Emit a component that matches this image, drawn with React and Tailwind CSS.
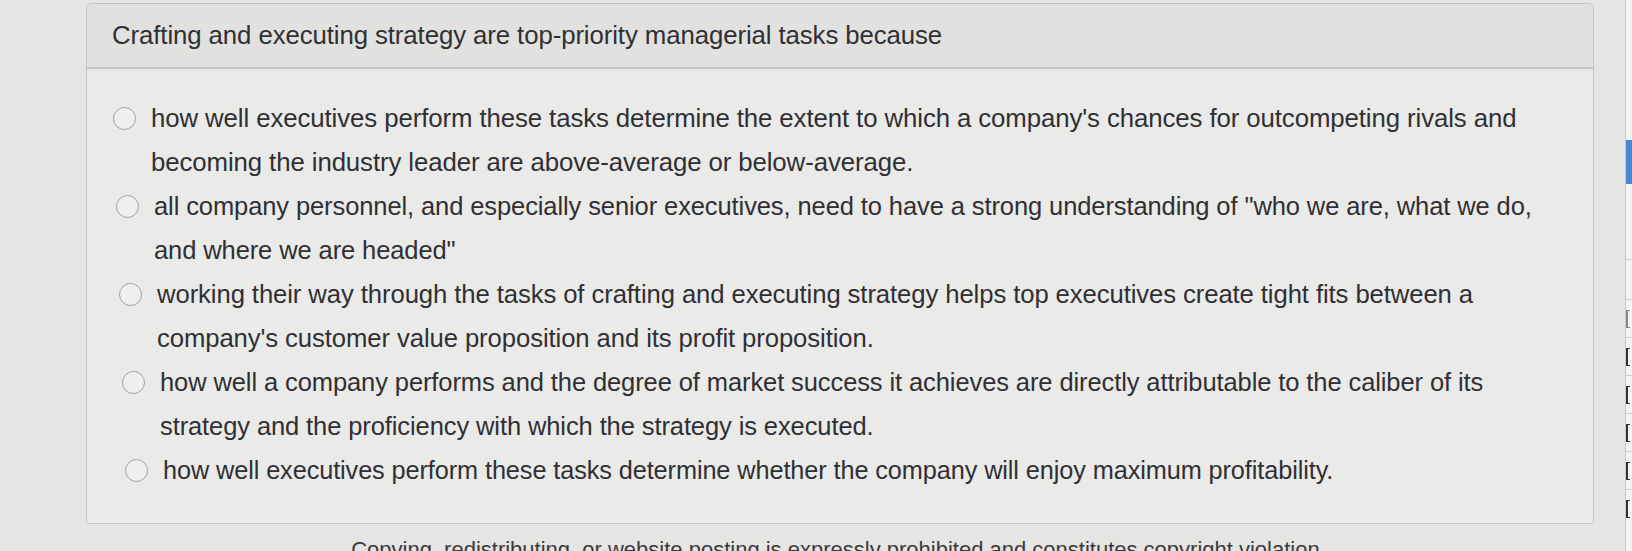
import React from 'react';

const options = [
  {
    id: 'a',
    shift: 'pl-[0px] text-[25.8px]',
    lines: [
      "how well executives perform these tasks determine the extent to which a company's chances for outcompeting rivals and",
      'becoming the industry leader are above-average or below-average.',
    ],
  },
  {
    id: 'b',
    shift: 'pl-[3px] text-[25.5px]',
    lines: [
      'all company personnel, and especially senior executives, need to have a strong understanding of "who we are, what we do,',
      'and where we are headed"',
    ],
  },
  {
    id: 'c',
    shift: 'pl-[6px] text-[25.7px]',
    lines: [
      'working their way through the tasks of crafting and executing strategy helps top executives create tight fits between a',
      "company's customer value proposition and its profit proposition.",
    ],
  },
  {
    id: 'd',
    shift: 'pl-[9px] text-[25.5px]',
    lines: [
      'how well a company performs and the degree of market success it achieves are directly attributable to the caliber of its',
      'strategy and the proficiency with which the strategy is executed.',
    ],
  },
  {
    id: 'e',
    shift: 'pl-[12px] text-[25.3px]',
    lines: ['how well executives perform these tasks determine whether the company will enjoy maximum profitability.'],
  },
];

const Option = ({ opt }) => (
  <label className={`flex items-start gap-[15px] ${opt.shift}`}>
    <span className="mt-[11px] w-[23px] h-[23px] shrink-0 rounded-full border-[1.5px] border-[#a0a0a0] bg-[#efefed]"></span>
    <span className="flex flex-col">
      {opt.lines.map((l, i) => (
        <span key={i} className="whitespace-nowrap leading-[44px]">{l}</span>
      ))}
    </span>
  </label>
);

const App = () => {
  return (
    <div
      className="w-[1632px] h-[551px] overflow-hidden bg-[#e5e5e3] flex text-[#303034]"
      style={{ fontFamily: '"Liberation Sans", Arial, sans-serif' }}
    >
      <div className="w-[1625px] flex flex-col">
        <div className="shrink-0 ml-[86px] mt-[3px] w-[1508px] border border-[#c4c4c2] rounded-t-[6px] rounded-b-[4px] overflow-hidden">
          <div className="h-[65px] bg-[#e1e1df] border-b-2 border-[#c2c2c0] flex items-center pl-[25px]">
            <h1 className="text-[25.8px] tracking-[-0.1px]">
              Crafting and executing strategy are top-priority managerial tasks because
            </h1>
          </div>
          <div className="h-[454px] bg-[#eaeae8] pt-[27px] pl-[26px] tracking-[-0.1px] flex flex-col">
            {options.map((o) => (
              <Option key={o.id} opt={o} />
            ))}
          </div>
        </div>
        <p className="shrink-0 mt-[9px] text-center text-[22px] text-[#3a3a3e] pl-[52px]">
          Copying, redistributing, or website posting is expressly prohibited and constitutes copyright violation.
        </p>
      </div>
      <div className="w-[7px] bg-[#f4f4f2] border-l border-[#c9c9c7] flex flex-col">
        <div className="mt-[140px] h-[44px] bg-[#4a86d8]"></div>
        <div className="mt-[75px] h-[40px] border-t border-[#cfcfcf]"></div>
        <div className="h-[38px] border-t border-[#cfcfcf] pt-[10px]">
          <div className="w-[4px] h-[18px] border-l-2 border-y border-[#888]"></div>
        </div>
        <div className="h-[38px] border-t border-[#cfcfcf] pt-[10px]">
          <div className="w-[4px] h-[18px] border-l-2 border-y border-[#333]"></div>
        </div>
        <div className="h-[38px] border-t border-[#cfcfcf] pt-[10px]">
          <div className="w-[4px] h-[18px] border-l-2 border-y border-[#333]"></div>
        </div>
        <div className="h-[38px] border-t border-[#cfcfcf] pt-[10px]">
          <div className="w-[4px] h-[18px] border-l-2 border-y border-[#333]"></div>
        </div>
        <div className="h-[38px] border-t border-[#cfcfcf] pt-[10px]">
          <div className="w-[4px] h-[18px] border-l-2 border-y border-[#333]"></div>
        </div>
        <div className="h-[38px] border-t border-[#cfcfcf] pt-[10px]">
          <div className="w-[4px] h-[18px] border-l-2 border-y border-[#333]"></div>
        </div>
      </div>
    </div>
  );
};

export default App;
